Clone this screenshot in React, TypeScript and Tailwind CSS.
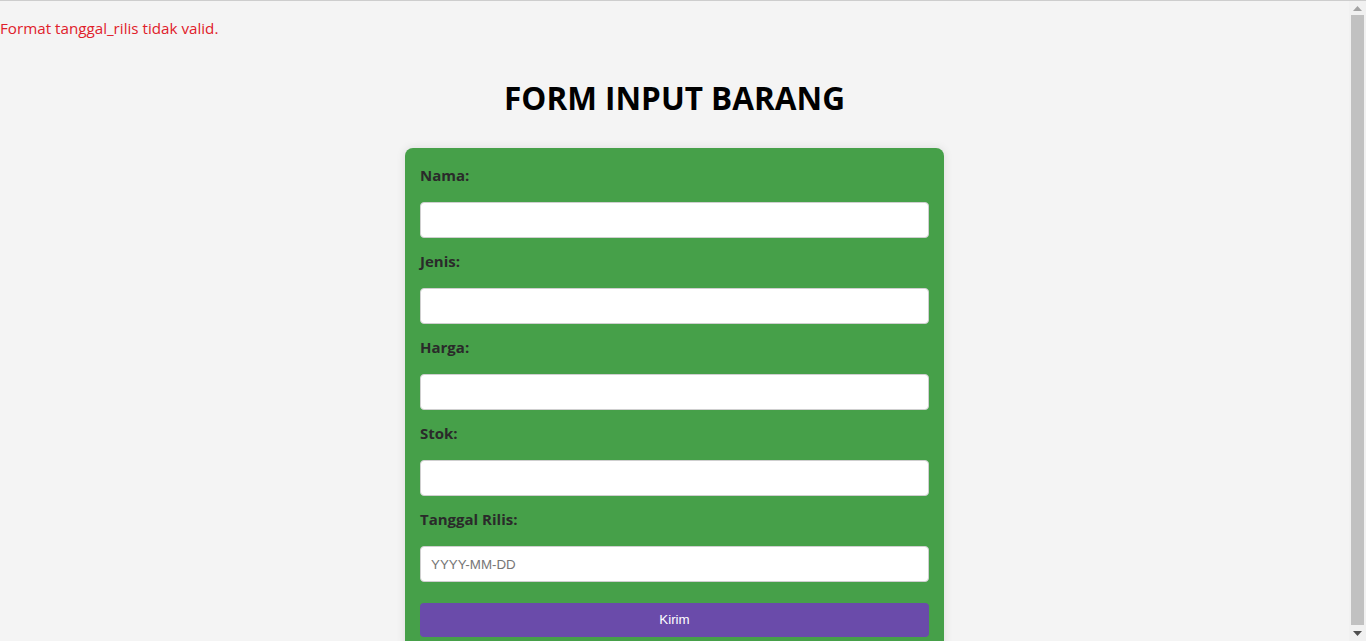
import type { FC } from 'react';

const FIELDS = [
    { id: 'nama', label: 'Nama:' },
    { id: 'jenis', label: 'Jenis:' },
    { id: 'harga', label: 'Harga:' },
    { id: 'stok', label: 'Stok:' },
    { id: 'tanggal_rilis', label: 'Tanggal Rilis:', placeholder: 'YYYY-MM-DD' },
];

const Field: FC<{ id: string; label: string; placeholder?: string }> = ({ id, label, placeholder }) => (
    <div className="flex flex-col">
        <label htmlFor={id} className="block h-[24px] leading-[24px] text-[15px] font-bold text-[#2a2a2a] mb-[15px]">
            {label}
        </label>
        <input
            id={id}
            type="text"
            placeholder={placeholder}
            className="h-[36px] w-full rounded-[4px] border border-[#cfcfcf] bg-white px-[10px] text-[13.33px] text-[#222] placeholder:text-[#767676] outline-none"
            style={{ fontFamily: '"Liberation Sans", Arial, sans-serif' }}
        />
    </div>
);

// fake browser scrollbar, so the page is centred in 1349px like the reference
const Scrollbar: FC = () => (
    <div className="flex h-[640px] w-[17px] shrink-0 flex-col items-center bg-[#f1f1f1]">
        <div className="flex h-[14px] w-full items-center justify-center">
            <svg width="9" height="5" viewBox="0 0 9 5"><path d="M0 5 L4.5 0 L9 5 Z" fill="#a3a3a3" /></svg>
        </div>
        <div className="w-[13px] flex-1 bg-[#c1c1c1]" />
        <div className="flex h-[16px] w-full items-center justify-center">
            <svg width="9" height="5" viewBox="0 0 9 5"><path d="M0 0 L9 0 L4.5 5 Z" fill="#505050" /></svg>
        </div>
    </div>
);

export default function App() {
    return (
        <div
            className="flex w-full items-start bg-[#f4f4f4] border-t border-[#cdcdcd]"
            style={{ fontFamily: '"Open Sans", "Noto Sans", sans-serif' }}
        >
            <main className="min-h-[900px] flex-1">
                <p className="pt-[15px] text-[15.2px] leading-[24px] text-[#e0202a]">Format tanggal_rilis tidak valid.</p>

                <h1 className="mt-[38px] text-center text-[31.5px] leading-[40px] font-bold text-black">FORM INPUT BARANG</h1>

                <form className="mx-auto mt-[30px] w-[539px] rounded-[8px] bg-[#46a049] p-[15px] shadow-[0_0_10px_rgba(0,0,0,0.1)]">
                    <div className="flex flex-col gap-[11px]">
                        {FIELDS.map((f) => (
                            <Field key={f.id} {...f} />
                        ))}
                    </div>
                    <button
                        type="submit"
                        className="mt-[21px] h-[34px] w-full rounded-[4px] bg-[#6a4baa] text-[13.33px] font-medium text-white"
                        style={{ fontFamily: '"Liberation Sans", Arial, sans-serif' }}
                    >
                        Kirim
                    </button>
                </form>
            </main>
            <Scrollbar />
        </div>
    );
}
